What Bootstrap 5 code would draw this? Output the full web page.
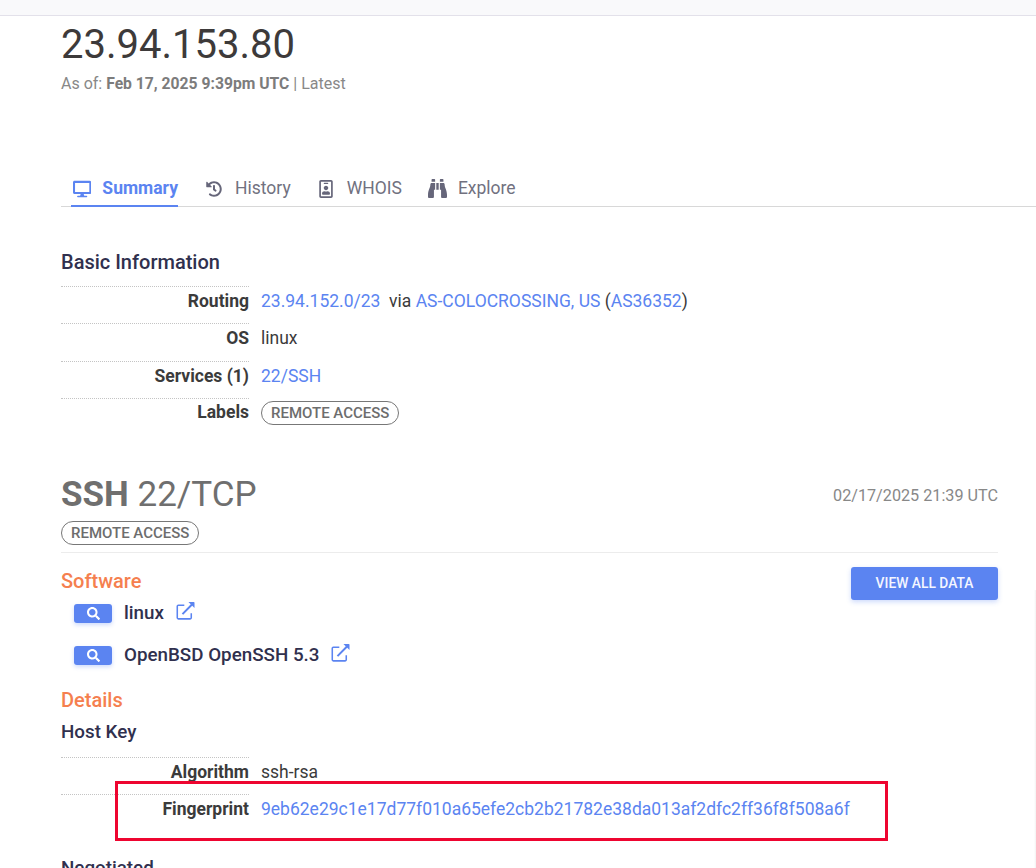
<!DOCTYPE html>
<html lang="en">
<head>
<meta charset="utf-8">
<title>23.94.153.80</title>
<link href="https://cdn.jsdelivr.net/npm/bootstrap@5.3.0/dist/css/bootstrap.min.css" rel="stylesheet">
<style>
html,body{height:868px;overflow:hidden}
body{font-family:Roboto,"Liberation Sans",sans-serif;font-size:17.5px;color:#3b3b3b;background:#fff}
a{color:#5b84f1;text-decoration:none}
.topstrip{height:16px;background:#f9f9fb;border-bottom:1px solid #e3e1ea}
.pagewrap{padding:0 38px 0 61px}
.ipaddr{font-size:40px;font-weight:400;line-height:48px;margin:5px 0 0;color:#3d3a3a}
.asof{color:#888;font-size:16px;line-height:24px;margin-top:3px}
.asof b{font-weight:700;font-size:15.7px;color:#7c7c7c}
.tabbar{margin:72px -38px 0 0;height:39px;border-bottom:1px solid #d8d8d8;flex-wrap:nowrap}
.tabitem{display:flex;align-items:center;gap:13px;height:39px;padding:2px 0 0 0;margin:0 28px 0 0;color:#71717f;font-size:17.5px;white-space:nowrap}
.tabitem svg{fill:#66667a}
.tabitem.on{color:#5b84f1;font-weight:700;gap:11px;padding:4px 0 0 2px;border-bottom:2px solid #5b84f1;margin-left:10px;width:107px}
.tabitem.on svg{fill:#5b84f1}
.tabitem.badgetab{gap:14px;margin-right:26px}
.tabitem.wide{gap:11px}
.secthead{font-size:20px;font-weight:500;color:#30304e;line-height:24px;margin:43px 0 12px}
.inforow{display:flex;align-items:center;height:37.4px;padding-bottom:7px;position:relative}
.inforow.tagrow{padding-bottom:10px}
.inforow.tagrow .pilltag{margin-top:-2px}
.inforow::before{content:"";position:absolute;left:0;top:0;width:188px;border-top:1px dotted #c4c4c4}
.rowlabel{width:188px;text-align:right;font-weight:700;color:#3b3b3b;flex:none;margin:0}
.rowvalue{margin-left:12px;white-space:nowrap}
.pilltag{display:inline-block;border:1px solid #777;border-radius:12px;color:#6d6d6d;font-size:15px;font-weight:500;line-height:22px;padding:0 9px;text-transform:uppercase}
.svchead{margin-top:37px;align-items:center}
.svcname{font-size:35px;line-height:44px;color:#6f6f6f;margin:0;font-weight:400}
.svcname b{font-weight:700}
.svctime{color:#888;font-size:16.2px;margin-top:4px}
.svclabel{margin-top:2px;padding-bottom:7px;border-bottom:1px solid #ececec;height:34px}
.orangehead{color:#f57f4f;font-size:20px;font-weight:500;line-height:24px;margin:0}
.detailshead{margin-top:11px}
.softwrap{position:relative;padding-top:16px}
.viewbtn{position:absolute;right:0;top:14px;width:147px;height:33px;padding:1px 0 0;font-size:13.8px;font-weight:500;background:#5b84f1;border:0;border-radius:3px;color:#f4f6ff;box-shadow:0 2px 5px rgba(91,132,241,.3);text-transform:uppercase}
.softlist{padding-left:13px}
.softrow{display:flex;align-items:center;height:42px;color:#30304e;font-size:18.8px;font-weight:500}
.softsearch{width:38px;height:19px;padding:0;margin-right:12px;background:#5b84f1;border:0;border-radius:3px;display:flex;align-items:center;justify-content:center;box-shadow:0 2px 4px rgba(91,132,241,.3)}
.softsearch svg{fill:#fff}
.softlink{margin-left:12px;margin-top:-5px}
.softlink .boxline{fill:none;stroke:#5b84f1;stroke-width:44}
.softlink .arrowshaft{fill:none;stroke:#5b84f1;stroke-width:56}
.softlink .arrowhead{fill:#5b84f1}
.hostkey{font-size:18.8px;font-weight:500;color:#30304e;line-height:24px;margin:8px 0 13px}
.redbox{position:absolute;left:54px;top:-13px;width:773px;height:60px;border:3px solid #ee0530;pointer-events:none}
.nexthead{font-size:18.8px;font-weight:500;color:#30304e;line-height:24px;margin-top:25px}
.edgeshade{position:absolute;right:0;top:590px;width:2px;height:278px;background:linear-gradient(90deg,rgba(0,0,0,0),rgba(0,0,0,.05))}
</style>
</head>
<body>
<div class="topstrip"></div>
<main class="pagewrap">
  <h1 class="ipaddr">23.94.153.80</h1>
  <div class="asof">As of: <b>Feb 17, 2025 9:39pm UTC</b> | Latest</div>

  <nav class="nav tabbar">
    <a class="tabitem on" href="#"><svg width="20" height="18" viewBox="0 0 576 512"><path d="M528 0H48C21.5 0 0 21.5 0 48v320c0 26.5 21.5 48 48 48h192l-16 48h-72c-13.3 0-24 10.7-24 24s10.7 24 24 24h272c13.3 0 24-10.7 24-24s-10.7-24-24-24h-72l-16-48h192c26.5 0 48-21.5 48-48V48c0-26.5-21.5-48-48-48zm-16 352H64V64h448v288z"/></svg>Summary</a>
    <a class="tabitem" href="#"><svg width="16" height="16" viewBox="0 0 512 512"><path d="M504 255.531c.253 136.64-111.18 248.372-247.82 248.468-59.015.042-113.223-20.53-155.822-54.911-11.077-8.94-11.905-25.541-1.839-35.607l11.267-11.267c8.609-8.609 22.353-9.551 31.891-1.984C173.062 425.135 212.781 440 256 440c101.705 0 184-82.311 184-184 0-101.705-82.311-184-184-184-48.814 0-93.149 18.969-126.068 49.932l50.754 50.754c10.08 10.08 2.941 27.314-11.313 27.314H24c-8.837 0-16-7.163-16-16V38.627c0-14.254 17.234-21.393 27.314-11.314l49.372 49.372C129.209 34.136 189.552 8 256 8c136.81 0 247.747 110.78 248 247.531zm-180.912 78.784l9.823-12.63c8.138-10.463 6.253-25.542-4.21-33.679L288 256.349V152c0-13.255-10.745-24-24-24h-16c-13.255 0-24 10.745-24 24v135.651l65.409 50.874c10.463 8.137 25.541 6.253 33.679-4.21z"/></svg>History</a>
    <a class="tabitem badgetab" href="#"><svg width="14" height="18" viewBox="0 0 384 512"><path d="M336 0H48C21.5 0 0 21.5 0 48v416c0 26.5 21.5 48 48 48h288c26.5 0 48-21.5 48-48V48c0-26.5-21.5-48-48-48zm0 464H48V48h288v416zM144 112h96c8.8 0 16-7.2 16-16s-7.2-16-16-16h-96c-8.8 0-16 7.2-16 16s7.2 16 16 16zm48 176c35.3 0 64-28.7 64-64s-28.7-64-64-64-64 28.7-64 64 28.7 64 64 64zm-89.6 128h179.2c12.4 0 22.4-8.6 22.4-19.2v-19.2c0-31.8-30.1-57.6-67.2-57.6-10.8 0-18.7 8-44.8 8-26.9 0-33.4-8-44.8-8-37.1 0-67.2 25.8-67.2 57.6v19.2c0 10.6 10 19.2 22.4 19.2z"/></svg>WHOIS</a>
    <a class="tabitem wide" href="#"><svg width="19" height="19" viewBox="0 32 512 448" preserveAspectRatio="none"><path d="M416 48c0-8.84-7.16-16-16-16h-64c-8.84 0-16 7.16-16 16v48h96V48zM63.91 159.99C61.4 253.84 3.46 274.22 0 404v44c0 17.67 14.33 32 32 32h96c17.67 0 32-14.33 32-32V288h32V128H95.84c-17.63 0-31.45 14.37-31.93 31.99zm384.18 0c-.48-17.62-14.3-31.99-31.93-31.99H320v160h32v160c0 17.67 14.33 32 32 32h96c17.67 0 32-14.33 32-32v-44c-3.46-129.78-61.4-150.16-63.91-244.01zM176 32h-64c-8.84 0-16 7.16-16 16v48h96V48c0-8.84-7.16-16-16-16zm48 256h64V128h-64v160z"/></svg>Explore</a>
  </nav>

  <h2 class="secthead">Basic Information</h2>
  <div class="inforow"><span class="rowlabel">Routing</span><span class="rowvalue"><a href="#">23.94.152.0/23</a>&nbsp; via <a href="#">AS-COLOCROSSING, US</a> (<a href="#">AS36352</a>)</span></div>
  <div class="inforow"><span class="rowlabel">OS</span><span class="rowvalue">linux</span></div>
  <div class="inforow"><span class="rowlabel">Services (1)</span><span class="rowvalue"><a href="#">22/SSH</a></span></div>
  <div class="inforow tagrow"><span class="rowlabel">Labels</span><span class="rowvalue"><span class="pilltag">Remote Access</span></span></div>

  <div class="d-flex justify-content-between svchead">
    <h2 class="svcname"><b>SSH</b> 22/TCP</h2>
    <span class="svctime">02/17/2025 21:39 UTC</span>
  </div>
  <div class="svclabel"><span class="pilltag">Remote Access</span></div>

  <div class="softwrap">
    <button class="btn viewbtn" type="button">View All Data</button>
    <h3 class="orangehead">Software</h3>
    <div class="softlist">
      <div class="softrow"><span class="softsearch"><svg width="13" height="13" viewBox="0 0 512 512"><path d="M505 442.7L405.3 343c-4.5-4.5-10.6-7-17-7H372c27.6-35.3 44-79.7 44-128C416 93.1 322.9 0 208 0S0 93.1 0 208s93.1 208 208 208c48.3 0 92.7-16.4 128-44v16.3c0 6.4 2.5 12.5 7 17l99.7 99.7c9.4 9.4 24.6 9.4 33.9 0l28.3-28.3c9.4-9.4 9.4-24.6.1-34zM208 336c-70.7 0-128-57.2-128-128 0-70.7 57.2-128 128-128 70.7 0 128 57.2 128 128 0 70.7-57.2 128-128 128z"/></svg></span>linux<svg class="softlink" width="19" height="18" viewBox="0 0 512 512"><path class="boxline" d="M420 320v130a30 30 0 0 1-30 30H52a30 30 0 0 1-30-30V122a30 30 0 0 1 30-30h170"/><path class="arrowshaft" d="M170 345L440 72"/><path class="arrowhead" d="M340 0h150a22 22 0 0 1 22 22v150z"/></svg></div>
      <div class="softrow"><span class="softsearch"><svg width="13" height="13" viewBox="0 0 512 512"><path d="M505 442.7L405.3 343c-4.5-4.5-10.6-7-17-7H372c27.6-35.3 44-79.7 44-128C416 93.1 322.9 0 208 0S0 93.1 0 208s93.1 208 208 208c48.3 0 92.7-16.4 128-44v16.3c0 6.4 2.5 12.5 7 17l99.7 99.7c9.4 9.4 24.6 9.4 33.9 0l28.3-28.3c9.4-9.4 9.4-24.6.1-34zM208 336c-70.7 0-128-57.2-128-128 0-70.7 57.2-128 128-128 70.7 0 128 57.2 128 128 0 70.7-57.2 128-128 128z"/></svg></span>OpenBSD OpenSSH 5.3<svg class="softlink" width="19" height="18" viewBox="0 0 512 512"><path class="boxline" d="M420 320v130a30 30 0 0 1-30 30H52a30 30 0 0 1-30-30V122a30 30 0 0 1 30-30h170"/><path class="arrowshaft" d="M170 345L440 72"/><path class="arrowhead" d="M340 0h150a22 22 0 0 1 22 22v150z"/></svg></div>
    </div>
    <h3 class="orangehead detailshead">Details</h3>
    <div class="hostkey">Host Key</div>
    <div class="inforow"><span class="rowlabel">Algorithm</span><span class="rowvalue">ssh-rsa</span></div>
    <div class="inforow"><span class="rowlabel">Fingerprint</span><span class="rowvalue"><a href="#">9eb62e29c1e17d77f010a65efe2cb2b21782e38da013af2dfc2ff36f8f508a6f</a></span><div class="redbox"></div></div>
    <div class="nexthead">Negotiated</div>
  </div>
</main>
<div class="edgeshade"></div>
</body>
</html>
